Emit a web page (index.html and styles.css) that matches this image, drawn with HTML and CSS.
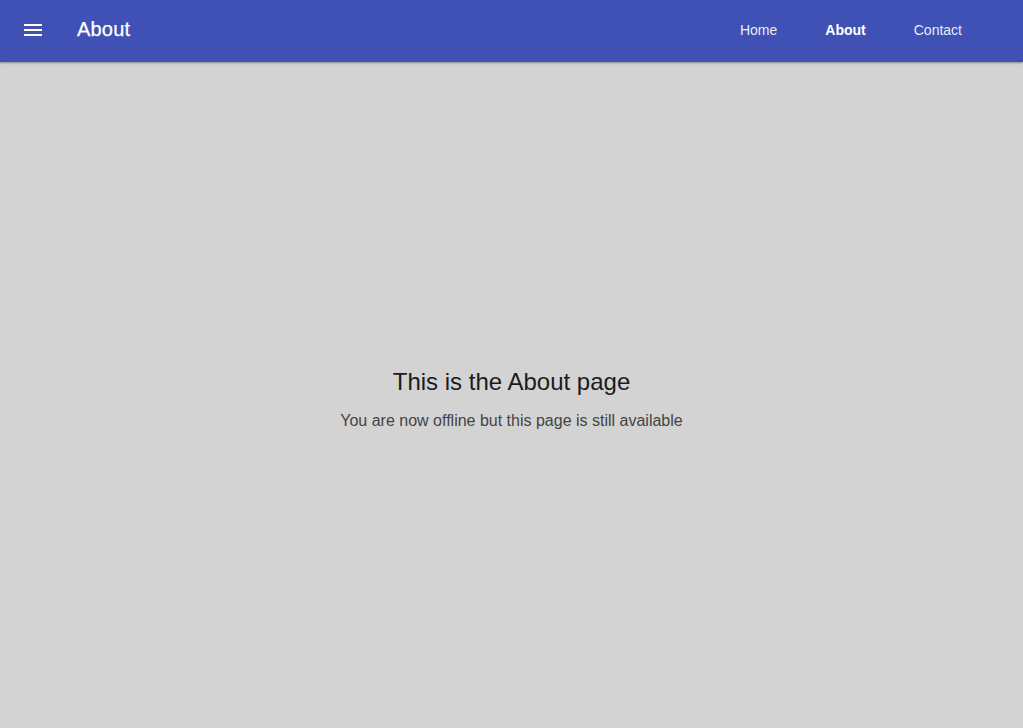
FILE: index.html
```html
<!DOCTYPE html>
<html lang="en">
<head>
<meta charset="utf-8">
<title>About</title>
<link rel="stylesheet" href="styles.css">
</head>
<body>
<header class="app-bar">
  <button class="menu-btn" aria-label="Menu">
    <svg width="18" height="12" viewBox="0 0 18 12"><rect x="0" y="0" width="18" height="2" fill="#fff"/><rect x="0" y="5" width="18" height="2" fill="#fff"/><rect x="0" y="10" width="18" height="2" fill="#fff"/></svg>
  </button>
  <div class="title">About</div>
  <nav class="nav">
    <a class="nav-link" href="#">Home</a>
    <a class="nav-link active" href="#">About</a>
    <a class="nav-link" href="#">Contact</a>
  </nav>
</header>
<main class="content">
  <h1 class="heading">This is the About page</h1>
  <p class="sub">You are now offline but this page is still available</p>
</main>
</body>
</html>
```
FILE: styles.css
```css
html, body {
  margin: 0;
  padding: 0;
  height: 100%;
}
body {
  background: #d3d3d3;
  font-family: "Liberation Sans", Arial, sans-serif;
  display: flex;
  flex-direction: column;
  overflow: hidden;
}
.app-bar {
  position: relative;
  z-index: 1;
  flex: 0 0 62px;
  height: 62px;
  box-sizing: border-box;
  padding-bottom: 4px;
  background: #3f51b5;
  display: flex;
  align-items: center;
  box-shadow: 0 1px 2px rgba(0, 0, 0, 0.35);
}
.menu-btn {
  margin: 1px 0 0 24px;
  padding: 0;
  border: 0;
  background: none;
  width: 18px;
  height: 12px;
  display: block;
}
.menu-btn svg {
  display: block;
}
.title {
  margin-left: 35px;
  color: #fff;
  font-size: 20px;
  line-height: 20px;
  margin-bottom: 1px;
  letter-spacing: 0.2px;
  -webkit-text-stroke: 0.25px #fff;
}
.nav {
  margin-left: auto;
  padding-right: 37px;
  display: flex;
}
.nav-link {
  padding: 0 24px;
  color: rgba(255, 255, 255, 0.9);
  text-decoration: none;
  font-size: 14px;
  line-height: 14px;
  margin-top: 2px;
}
.nav-link.active {
  font-weight: bold;
  color: #fff;
}
.content {
  flex: 1;
  display: flex;
  flex-direction: column;
  align-items: center;
  justify-content: center;
  padding-top: 8px;
}
.heading {
  margin: 0;
  font-weight: normal;
  font-size: 24px;
  line-height: 28px;
  color: #1c1c1c;
}
.sub {
  margin: 15px 0 0;
  font-size: 16px;
  line-height: 20px;
  color: #444;
}
```
